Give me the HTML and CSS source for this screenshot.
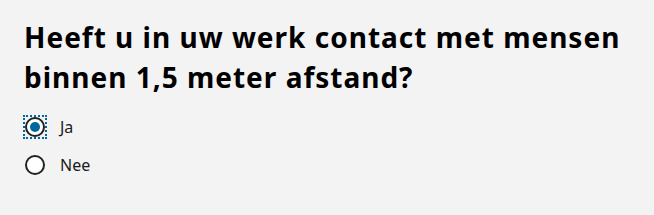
FILE: index.html
```html
<!DOCTYPE html>
<html lang="nl">
<head>
    <meta charset="UTF-8">
    <title>Vraag</title>
    <link rel="stylesheet" href="styles.css">
</head>
<body>
    <form class="question">
        <fieldset>
            <legend>Heeft u in uw werk contact met mensen binnen 1,5 meter afstand?</legend>
            <label class="option">
                <input type="radio" name="contact" value="ja" checked>
                <span class="box focus"><span class="dot"></span></span>
                <span class="text">Ja</span>
            </label>
            <label class="option">
                <input type="radio" name="contact" value="nee">
                <span class="box"><span class="dot"></span></span>
                <span class="text">Nee</span>
            </label>
        </fieldset>
    </form>
</body>
</html>
```

FILE: styles.css
```css
body {
    margin: 0;
    background: #f3f3f3;
    font-family: "Noto Sans", "Open Sans", sans-serif;
    color: #000;
}
.question {
    padding: 17px 24px;
}
fieldset {
    border: none;
    margin: 0;
    padding: 0;
}
legend {
    padding: 0;
    font-size: 28px;
    font-weight: 700;
    line-height: 40px;
    letter-spacing: 1px;
    max-width: 620px;
    margin-bottom: 11px;
}
.option {
    display: flex;
    align-items: center;
    gap: 13px;
    height: 38px;
    font-size: 16px;
    color: #1a1a1a;
    cursor: pointer;
}
.option input {
    display: none;
}
.box {
    width: 24px;
    height: 24px;
    margin-left: -1px;
    display: flex;
    align-items: center;
    justify-content: center;
}
.box.focus {
    outline: 2px dotted #01689b;
    outline-offset: -2px;
}
.dot {
    position: relative;
    width: 16px;
    height: 16px;
    border: 2px solid #222;
    border-radius: 50%;
    background: #fff;
    box-sizing: content-box;
}
.option input:checked + .box .dot::after {
    content: '';
    position: absolute;
    top: 3px;
    left: 3px;
    width: 10px;
    height: 10px;
    border-radius: 50%;
    background: #01689b;
}
```
